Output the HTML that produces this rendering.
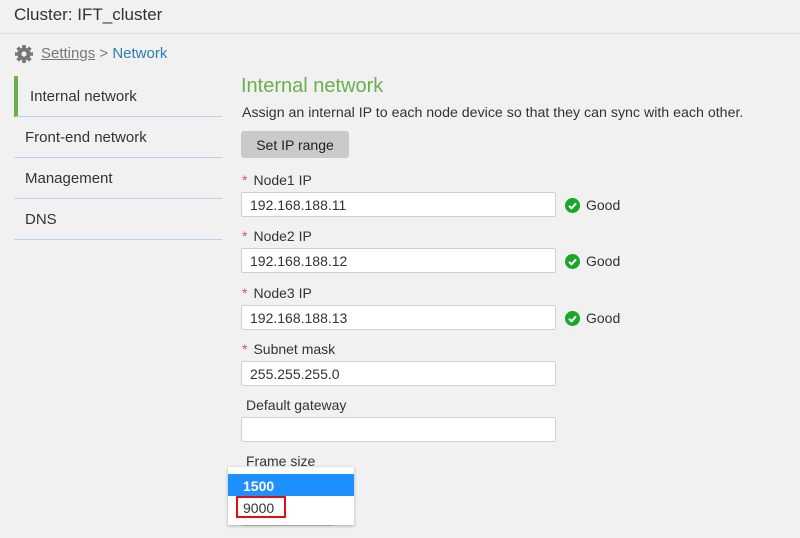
<!DOCTYPE html>
<html><head><style>
body{margin:0;width:800px;height:538px;background:#f1f1f1;font-family:"Liberation Sans",sans-serif;color:#333;position:relative;overflow:hidden}
.a{position:absolute;white-space:nowrap}
.hdr{left:0;top:0;width:800px;height:33px;border-bottom:1px solid #dcdcdc;}
.nav{left:14px;width:208px;height:40px;border-bottom:1px solid #b5d3ee;font-size:15px;line-height:42px}
.inp{left:241px;width:313px;height:23px;background:#fff;border:1px solid #d0d0d0;border-radius:2px;font-size:14px;line-height:25px;padding-left:0}
.inp span{margin-left:8px}
.lbl{font-size:14px}
.star{color:#e05050;margin-right:6px}
.good{font-size:14px}
.ck{display:inline-block;width:15px;height:15px;border-radius:50%;background:#1aa626;vertical-align:-3px;margin-right:6px;position:relative}
</style></head><body>
<div class="a hdr"></div>
<div class="a" style="left:14px;top:5px;font-size:17px">Cluster: IFT_cluster</div>
<svg class="a" style="left:14px;top:44px" width="20" height="20" viewBox="0 0 20 20"><g fill="#777"><circle cx="10" cy="10" r="6.5"/><g stroke="#777" stroke-width="3.6"><line x1="10" y1="1" x2="10" y2="19"/><line x1="1" y1="10" x2="19" y2="10"/><line x1="3.6" y1="3.6" x2="16.4" y2="16.4"/><line x1="16.4" y1="3.6" x2="3.6" y2="16.4"/></g></g><circle cx="10" cy="10" r="2.6" fill="#f1f1f1"/></svg>
<div class="a" style="left:41px;top:45px;font-size:15px"><span style="color:#777;text-decoration:underline">Settings</span> <span style="color:#777">&gt;</span> <span style="color:#2a7fb0">Network</span></div>
<div class="a nav" style="top:76px;border-left:4px solid #6ab04c;width:204px;"><span style="margin-left:12px">Internal network</span></div>
<div class="a nav" style="top:117px"><span style="margin-left:11px">Front-end network</span></div>
<div class="a nav" style="top:158px"><span style="margin-left:11px">Management</span></div>
<div class="a nav" style="top:199px"><span style="margin-left:11px">DNS</span></div>
<div class="a" style="left:241px;top:75px;font-size:20px;color:#6ab04c">Internal network</div>
<div class="a" style="left:242px;top:105px;font-size:14.2px">Assign an internal IP to each node device so that they can sync with each other.</div>
<div class="a" style="left:241px;top:131px;width:108px;height:27px;background:#cacaca;border-radius:3px;font-size:14px;line-height:29px;text-align:center;color:#222">Set IP range</div>
<div class="a lbl" style="left:242px;top:172px"><span class="star">*</span>Node1 IP</div>
<div class="a inp" style="top:192px"><span>192.168.188.11</span></div>
<div class="a good" style="left:565px;top:197px"><span class="ck"><svg width="15" height="15" style="position:absolute;left:0;top:0"><path d="M4 7.8l2.5 2.5 4.5-5" stroke="#fff" stroke-width="2" fill="none"/></svg></span>Good</div>
<div class="a lbl" style="left:242px;top:228px"><span class="star">*</span>Node2 IP</div>
<div class="a inp" style="top:248px"><span>192.168.188.12</span></div>
<div class="a good" style="left:565px;top:253px"><span class="ck"><svg width="15" height="15" style="position:absolute;left:0;top:0"><path d="M4 7.8l2.5 2.5 4.5-5" stroke="#fff" stroke-width="2" fill="none"/></svg></span>Good</div>
<div class="a lbl" style="left:242px;top:285px"><span class="star">*</span>Node3 IP</div>
<div class="a inp" style="top:305px"><span>192.168.188.13</span></div>
<div class="a good" style="left:565px;top:310px"><span class="ck"><svg width="15" height="15" style="position:absolute;left:0;top:0"><path d="M4 7.8l2.5 2.5 4.5-5" stroke="#fff" stroke-width="2" fill="none"/></svg></span>Good</div>
<div class="a lbl" style="left:242px;top:341px"><span class="star">*</span>Subnet mask</div>
<div class="a inp" style="top:361px"><span>255.255.255.0</span></div>
<div class="a lbl" style="left:246px;top:397px">Default gateway</div>
<div class="a inp" style="top:417px"></div>
<div class="a lbl" style="left:246px;top:453px">Frame size</div>
<div class="a" style="left:242px;top:500px;width:90px;height:24px;border:1px solid #ccc;background:#e8e8e8"></div>
<div class="a" style="left:228px;top:467px;width:126px;height:58px;background:#fff;box-shadow:0 1px 3px rgba(0,0,0,.3)">
<div style="position:absolute;left:0;top:7px;width:126px;height:22px;background:#1e90ff;color:#fff;font-size:14px;font-weight:bold;line-height:24px"><span style="margin-left:15px">1500</span></div>
<div style="position:absolute;left:8px;top:29px;width:46px;height:18px;border:2px solid #e01010;font-size:14px;line-height:20px;color:#333"><span style="margin-left:5px">9000</span></div>
</div>
</body></html>
